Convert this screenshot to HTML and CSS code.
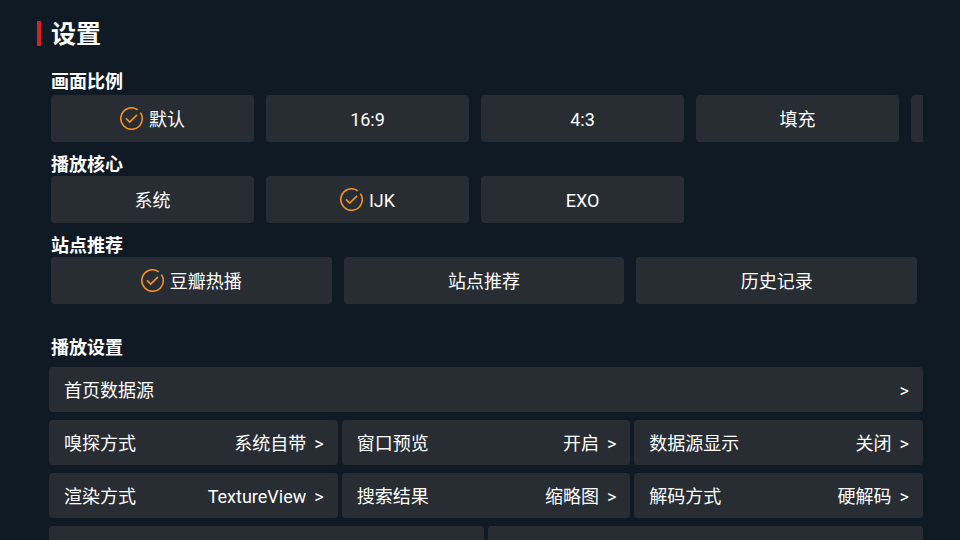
FILE: index.html
```html
<!DOCTYPE html>
<html lang="zh-CN">
<head>
<meta charset="utf-8">
<meta name="viewport" content="width=device-width, initial-scale=1">
<title>设置</title>
<link rel="stylesheet" href="styles.css">
</head>
<body>
<svg class="defs" aria-hidden="true">
  <symbol id="check" viewBox="0 0 23 23">
    <path d="M17.8 2.9A10.7 10.7 0 1 0 20.4 5.6" />
    <path d="M6 11.4l3.7 3.7 7.3-7.2" />
  </symbol>
</svg>
<main class="page">
  <h1 class="title">设置</h1>

  <section class="group">
    <h2 class="heading">画面比例</h2>
    <div class="chips">
      <button class="chip" aria-pressed="true"><svg class="check"><use href="#check"/></svg>默认</button>
      <button class="chip">16:9</button>
      <button class="chip">4:3</button>
      <button class="chip">填充</button>
      <button class="chip" aria-label="更多"></button>
    </div>
  </section>

  <section class="group">
    <h2 class="heading">播放核心</h2>
    <div class="chips">
      <button class="chip">系统</button>
      <button class="chip" aria-pressed="true"><svg class="check"><use href="#check"/></svg>IJK</button>
      <button class="chip">EXO</button>
    </div>
  </section>

  <section class="group">
    <h2 class="heading">站点推荐</h2>
    <div class="chips chips-fill">
      <button class="chip" aria-pressed="true"><svg class="check"><use href="#check"/></svg>豆瓣热播</button>
      <button class="chip">站点推荐</button>
      <button class="chip">历史记录</button>
    </div>
  </section>

  <section class="group player">
    <h2 class="heading">播放设置</h2>
    <div class="options">
      <button class="option wide"><span class="name">首页数据源</span><span>&gt;</span></button>
      <button class="option"><span class="name">嗅探方式</span><span>系统自带</span><span>&gt;</span></button>
      <button class="option"><span class="name">窗口预览</span><span>开启</span><span>&gt;</span></button>
      <button class="option"><span class="name">数据源显示</span><span>关闭</span><span>&gt;</span></button>
      <button class="option"><span class="name">渲染方式</span><span>TextureView</span><span>&gt;</span></button>
      <button class="option"><span class="name">搜索结果</span><span>缩略图</span><span>&gt;</span></button>
      <button class="option"><span class="name">解码方式</span><span>硬解码</span><span>&gt;</span></button>
      <button class="option half" aria-label="选项"></button>
      <button class="option half" aria-label="选项"></button>
    </div>
  </section>
</main>
</body>
</html>
```

FILE: styles.css
```css
* {
  box-sizing: border-box;
}

body {
  margin: 0;
  background: #101a25;
  color: #fff;
  font: 18px/24px Roboto, "Noto Sans CJK SC", sans-serif;
}

button {
  border: 0;
  margin: 0;
  border-radius: 4px;
  background: #282c33;
  color: inherit;
  font: inherit;
}

.defs {
  display: block;
  width: 0;
  height: 0;
}

.page {
  height: 100vh;
  padding: 21px 37px 0;
  overflow: hidden;
}

.title {
  height: 25px;
  margin: 0 0 25px;
  padding-left: 10px;
  border-left: 4px solid #d81e26;
  font-size: 25px;
  font-weight: 700;
  line-height: 27px;
}

.group {
  padding-left: 14px;
  margin-bottom: 12px;
}

.heading {
  margin: 0;
  font-size: 18px;
  font-weight: 700;
  line-height: 22px;
}

.title + .group .heading {
  margin-bottom: 2px;
}

.chips {
  display: flex;
  gap: 12px;
  overflow: hidden;
}

.chip {
  display: flex;
  flex: 0 0 203px;
  align-items: center;
  justify-content: center;
  gap: 6px;
  height: 47px;
  padding: 2px 0 0;
}

.chips-fill {
  padding-right: 6px;
}

.chips-fill .chip {
  flex: 1;
}

.check {
  width: 23px;
  height: 23px;
  margin-bottom: 2px;
  fill: none;
  stroke: #f7931e;
  stroke-width: 1.6;
}

.player {
  margin-top: 33px;
  padding-left: 12px;
}

.player .heading {
  padding-left: 2px;
}

.options {
  display: grid;
  grid-template-columns: repeat(6, 1fr);
  gap: 8px 4px;
  margin-top: 8px;
}

.option {
  display: flex;
  grid-column: span 2;
  align-items: center;
  gap: 8px;
  height: 45px;
  padding: 2px 14px 0 15px;
  text-align: left;
}

.name {
  flex: 1;
}

.wide {
  grid-column: span 6;
}

.half {
  grid-column: span 3;
}
```
